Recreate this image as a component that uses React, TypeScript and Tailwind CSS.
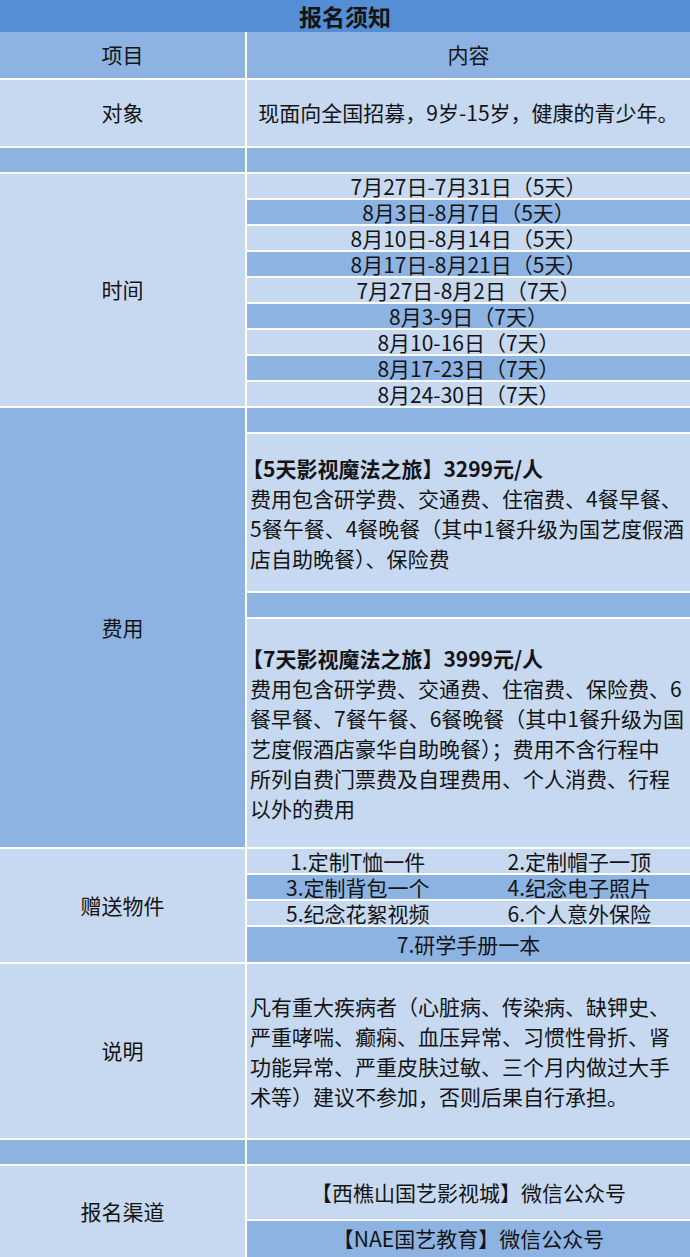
const LIGHT = 'bg-[#c6d9f1]';
const DARK = 'bg-[#8db3e2]';

const times = [
  '7月27日-7月31日（5天）',
  '8月3日-8月7日（5天）',
  '8月10日-8月14日（5天）',
  '8月17日-8月21日（5天）',
  '7月27日-8月2日（7天）',
  '8月3-9日（7天）',
  '8月10-16日（7天）',
  '8月17-23日（7天）',
  '8月24-30日（7天）',
];

const fee5 = [
  '费用包含研学费、交通费、住宿费、4餐早餐、',
  '5餐午餐、4餐晚餐（其中1餐升级为国艺度假酒',
  '店自助晚餐）、保险费',
];

const fee7 = [
  '费用包含研学费、交通费、住宿费、保险费、6',
  '餐早餐、7餐午餐、6餐晚餐（其中1餐升级为国',
  '艺度假酒店豪华自助晚餐）；费用不含行程中',
  '所列自费门票费及自理费用、个人消费、行程',
  '以外的费用',
];

const notes = [
  '凡有重大疾病者（心脏病、传染病、缺钾史、',
  '严重哮喘、癫痫、血压异常、习惯性骨折、肾',
  '功能异常、严重皮肤过敏、三个月内做过大手',
  '术等）建议不参加，否则后果自行承担。',
];

const gifts = [
  ['1.定制T恤一件', '2.定制帽子一顶'],
  ['3.定制背包一个', '4.纪念电子照片'],
  ['5.纪念花絮视频', '6.个人意外保险'],
];

function Label({ text, bg, h }: { text: string; bg: string; h: string }) {
  return (
    <div className={`w-[245px] shrink-0 flex items-center justify-center ${bg} ${h}`}>
      {text}
    </div>
  );
}

function Lines({ title, lines }: { title?: string; lines: string[] }) {
  return (
    <div className="leading-[30px] pl-[3px]">
      {title && <div className="font-bold whitespace-nowrap -ml-[8px]">{title}</div>}
      {lines.map((l) => (
        <div key={l} className="whitespace-nowrap">
          {l}
        </div>
      ))}
    </div>
  );
}

export default function App() {
  return (
    <div
      className="w-[690px] h-[1257px] overflow-hidden bg-white text-[21px] text-[#141414] flex flex-col gap-[2px]"
      style={{ fontFamily: '"Noto Sans CJK SC", "Noto Sans", sans-serif' }}
    >
      {/* Title + header */}
      <div>
        <div className="h-[32px] bg-[#558ed5] flex items-center justify-center text-[23px] font-bold">
          报名须知
        </div>
        <div className="flex gap-[2px] h-[46px]">
          <Label text="项目" bg={DARK} h="h-[46px]" />
          <div className={`flex-1 flex items-center justify-center ${DARK}`}>内容</div>
        </div>
      </div>

      {/* 对象 */}
      <div className="flex gap-[2px] h-[66px]">
        <Label text="对象" bg={LIGHT} h="h-[66px]" />
        <div className={`flex-1 flex items-center justify-center ${LIGHT}`}>
          现面向全国招募，9岁-15岁，健康的青少年。
        </div>
      </div>

      <div className="flex gap-[2px] h-[24px]">
        <div className={`w-[245px] ${DARK}`} />
        <div className={`flex-1 ${DARK}`} />
      </div>

      {/* 时间 */}
      <div className="flex gap-[2px]">
        <Label text="时间" bg={LIGHT} h="h-[232px]" />
        <div className="flex-1 flex flex-col gap-[2px]">
          {times.map((t, i) => (
            <div
              key={t}
              className={`h-[24px] flex items-center justify-center leading-none ${i % 2 ? DARK : LIGHT}`}
            >
              {t}
            </div>
          ))}
        </div>
      </div>

      {/* 费用 */}
      <div className="flex gap-[2px]">
        <Label text="费用" bg={DARK} h="h-[439px]" />
        <div className="flex-1 flex flex-col gap-[2px]">
          <div className={`h-[24px] ${DARK}`} />
          <div className={`h-[157px] flex items-center ${LIGHT}`}>
            <Lines title="【5天影视魔法之旅】3299元/人" lines={fee5} />
          </div>
          <div className={`h-[24px] ${DARK}`} />
          <div className={`h-[228px] flex items-center ${LIGHT}`}>
            <Lines title="【7天影视魔法之旅】3999元/人" lines={fee7} />
          </div>
        </div>
      </div>

      {/* 赠送物件 */}
      <div className="flex gap-[2px]">
        <Label text="赠送物件" bg={LIGHT} h="h-[113px]" />
        <div className="flex-1 flex flex-col gap-[2px]">
          {gifts.map((row, i) => (
            <div key={row[0]} className={`h-[24px] grid grid-cols-2 leading-none ${i % 2 ? DARK : LIGHT}`}>
              {row.map((g) => (
                <div key={g} className="flex items-center justify-center">
                  {g}
                </div>
              ))}
            </div>
          ))}
          <div className={`h-[35px] flex items-center justify-center ${DARK}`}>7.研学手册一本</div>
        </div>
      </div>

      {/* 说明 */}
      <div className="flex gap-[2px] h-[174px]">
        <Label text="说明" bg={LIGHT} h="h-[174px]" />
        <div className={`flex-1 flex items-center ${LIGHT}`}>
          <Lines lines={notes} />
        </div>
      </div>

      <div className="flex gap-[2px] h-[24px] shrink-0">
        <div className={`w-[245px] ${DARK}`} />
        <div className={`flex-1 ${DARK}`} />
      </div>

      {/* 报名渠道 */}
      <div className="flex gap-[2px]">
        <Label text="报名渠道" bg={LIGHT} h="h-[91px]" />
        <div className="flex-1 flex flex-col gap-[2px]">
          <div className={`h-[53px] flex items-center justify-center ${LIGHT}`}>
            【西樵山国艺影视城】微信公众号
          </div>
          <div className={`h-[36px] flex items-center justify-center ${DARK}`}>
            【NAE国艺教育】微信公众号
          </div>
        </div>
      </div>
    </div>
  );
}
